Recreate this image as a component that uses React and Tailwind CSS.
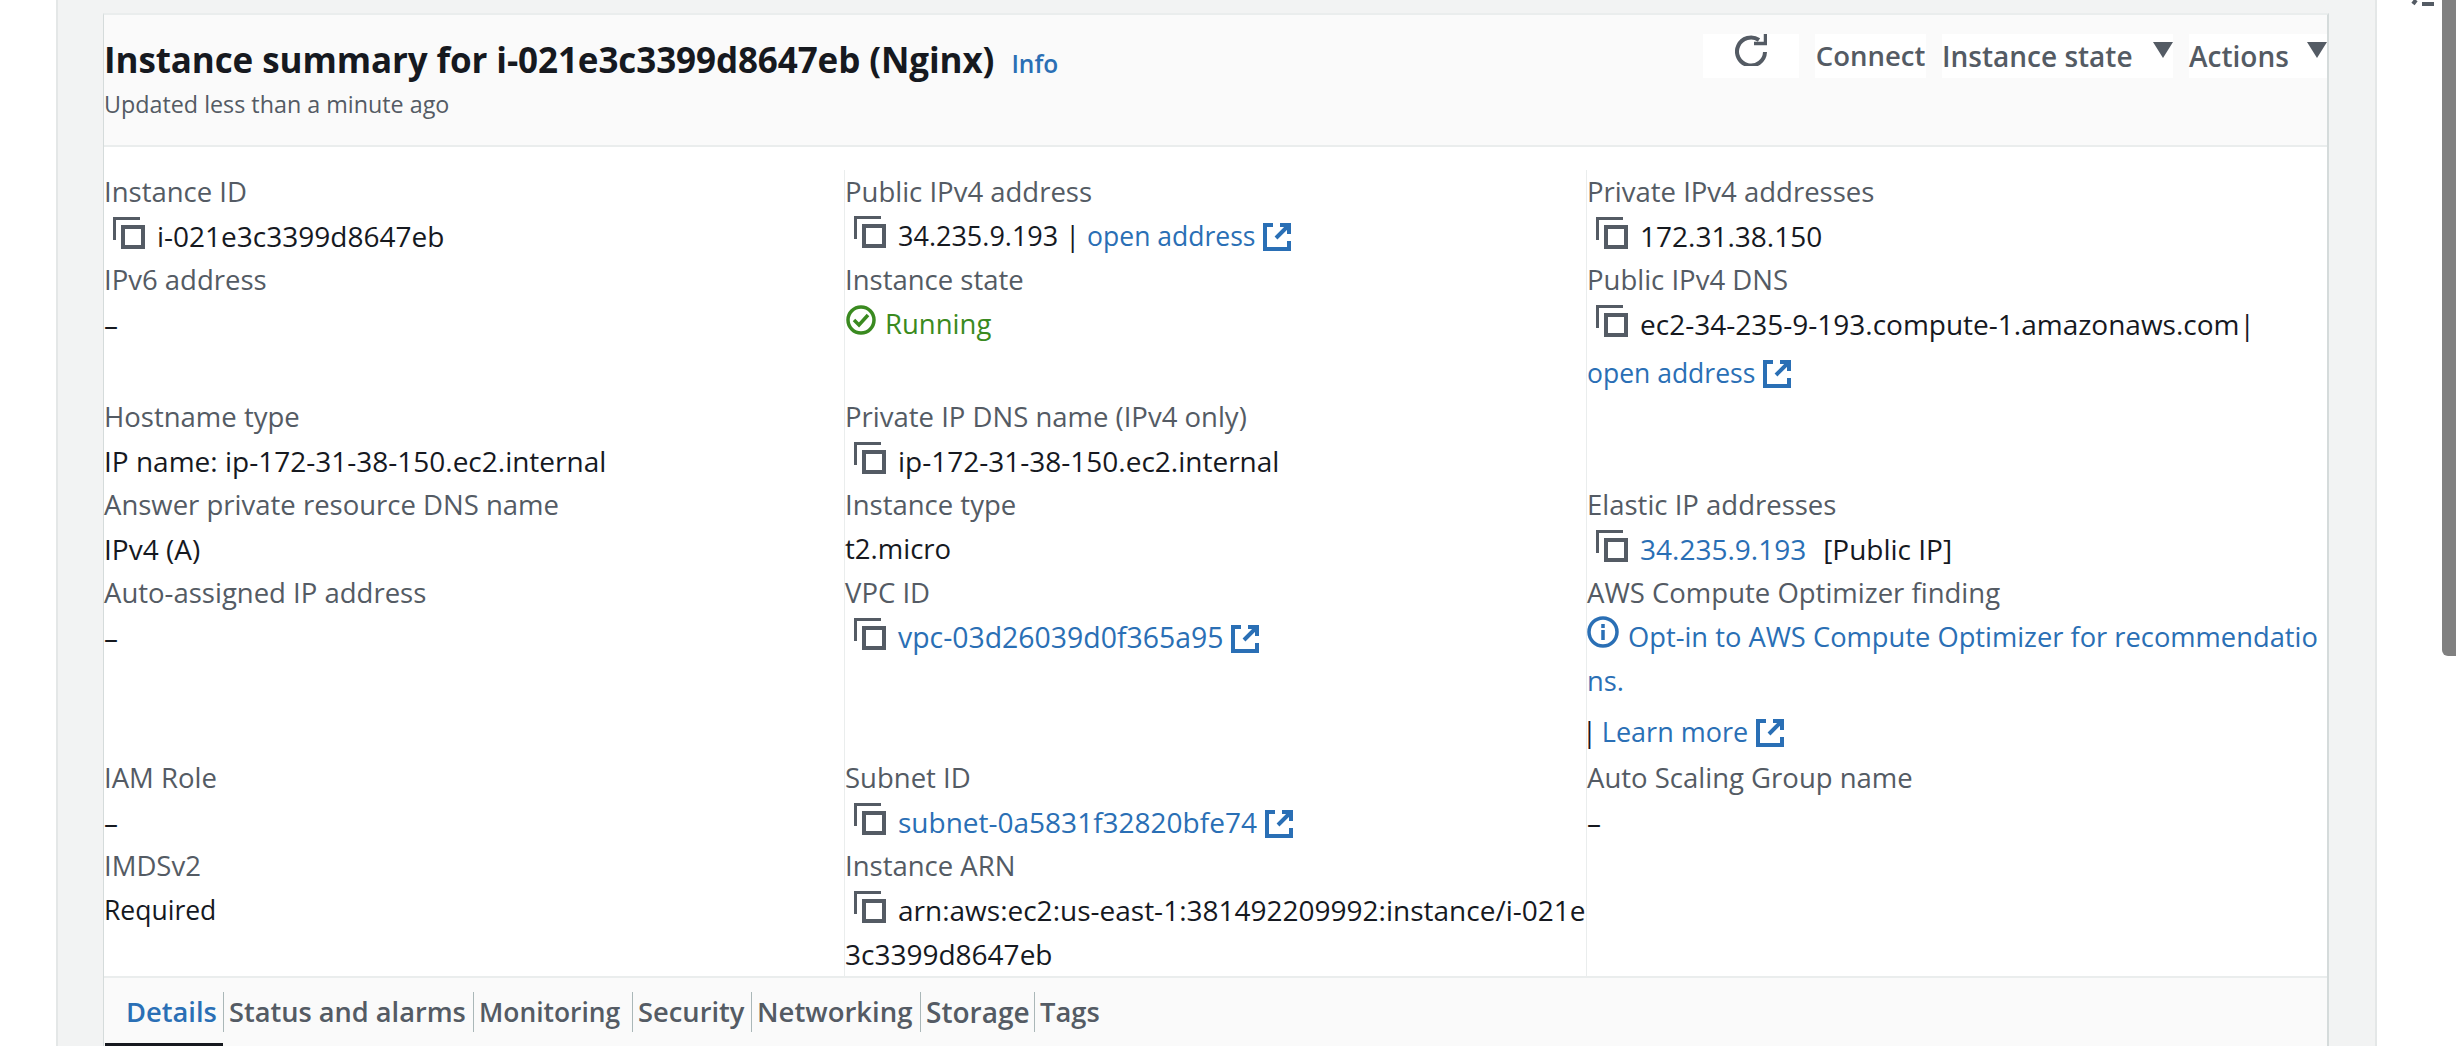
const FONT = "font-['Open_Sans','Liberation_Sans',sans-serif]";

function CopyIcon() {
  return (
    <svg viewBox="0 0 32 32" className="inline-block w-8 h-8 ml-[9px] mr-3 align-[-2px] fill-none stroke-[#545b64]">
      <path d="M1.5 23V1.5H27" strokeWidth="3" />
      <rect x="10" y="10" width="20" height="20" strokeWidth="4" />
    </svg>
  );
}

function ExtIcon() {
  return (
    <svg viewBox="0 0 28 28" className="inline-block w-7 h-7 ml-2 align-[-5px] fill-none stroke-[#2a6fb5]" strokeWidth="4">
      <path d="M10 2H2v24h24v-8M17 2h9v9M25 3 13 15" />
    </svg>
  );
}

function Link({ children, className = '' }) {
  return <span className={`text-[#2a6fb5] ${className}`}>{children}</span>;
}

function Label({ children }) {
  return <div className="h-11 leading-[44px] text-[#545b64]">{children}</div>;
}

function Value({ children, className = '' }) {
  return <div className={`leading-[44px] text-[28px] text-[#16191f] ${className}`}>{children}</div>;
}

function Field({ label, children }) {
  return (
    <div className="min-w-0 border-l border-[#eaeded] [&:nth-child(3n+1)]:border-l-0">
      <Label>{label}</Label>
      {children}
    </div>
  );
}

function Triangle() {
  return (
    <svg viewBox="0 0 20 16" className="w-5 h-4 fill-[#545b64]">
      <path d="M0 0h20L10 16z" />
    </svg>
  );
}

const tabs = [
  { name: 'Status and alarms', box: 'w-[250px]', size: 'text-[27.2px]' },
  { name: 'Monitoring', box: 'w-[159px]', size: 'text-[26.4px]' },
  { name: 'Security', box: 'w-[119px]', size: 'text-[27.3px]' },
  { name: 'Networking', box: 'w-[169px]', size: 'text-[27.5px]' },
  { name: 'Storage', box: 'w-[114px]', size: 'text-[28px]' },
  { name: 'Tags', box: 'w-[80px]', size: 'text-[27.3px]' },
];

export default function App() {
  return (
    <div className={`${FONT} flex h-[1046px] w-[2456px] overflow-hidden bg-white text-[27.5px]`}>
      <div className="w-14 shrink-0" />

      <main className="flex-1 border-x-2 border-[#e4e7e7] bg-[#f2f3f3] pt-[13px] pl-[45px] pr-[46px]">
        <section className="h-full bg-white border-l border-r-2 border-[#d5dbdb] border-t-2 border-t-[#eaeded] flex flex-col">
          <header className="h-[133px] bg-[#fafafa] border-b-2 border-[#eaeded] flex justify-between">
            <div className="pt-[23px]">
              <h1 className="leading-[44px] text-[#16191f] font-bold text-[35px] tracking-[-0.1px]">
                Instance summary for i-021e3c3399d8647eb (Nginx)
                <span className="ml-[17px] text-[24.5px] text-[#2a6fb5] font-semibold tracking-normal">Info</span>
              </h1>
              <p className="mt-[2px] text-[23.3px] leading-8 text-[#545b64]">Updated less than a minute ago</p>
            </div>
            <div className="flex gap-4 pt-[19px] h-[63px] box-content font-semibold text-[#545b64]">
              <div className="w-24 h-11 bg-white flex justify-center">
                <svg viewBox="0 0 32 32" className="w-8 h-8 fill-none stroke-[#545b64]" strokeWidth="4">
                  <path d="M24 6A14 14 0 1 0 30 18" />
                  <path d="M19 9.5H30.5V0" strokeWidth="3.5" />
                </svg>
              </div>
              <div className="h-11 bg-white leading-[44px] w-[111px] text-center whitespace-nowrap">Connect</div>
              <div className="h-11 bg-white leading-[44px] w-[231px] flex justify-between text-[28px]">
                Instance state
                <span className="pt-2"><Triangle /></span>
              </div>
              <div className="h-11 bg-white leading-[44px] w-[138px] flex justify-between text-[28px]">
                Actions
                <span className="pt-2"><Triangle /></span>
              </div>
            </div>
          </header>

          <div className="flex-1 pt-[23px] grid grid-cols-[740px_742px_1fr] grid-rows-[auto_auto_auto_auto_auto_auto_1fr]">
            <Field label="Instance ID"><Value><CopyIcon />i-021e3c3399d8647eb</Value></Field>
            <Field label="Public IPv4 address"><Value className="text-[27px]!"><CopyIcon />34.235.9.193 | <Link className="text-[26.5px]">open address</Link><ExtIcon /></Value></Field>
            <Field label="Private IPv4 addresses"><Value><CopyIcon />172.31.38.150</Value></Field>

            <Field label="IPv6 address"><Value>–</Value></Field>
            <Field label="Instance state">
              <Value className="text-[#3a8a20]! text-[27.5px]!">
                <svg viewBox="0 0 30 30" className="inline-block w-[30px] h-[30px] ml-px mr-[9px] align-[-1px] fill-none stroke-[#3a8a20]" strokeWidth="3.5">
                  <circle cx="15" cy="15" r="13" />
                  <path d="m8 15 5 5 9-10" />
                </svg>
                Running
              </Value>
            </Field>
            <Field label="Public IPv4 DNS">
              <Value><CopyIcon />ec2-34-235-9-193.compute-1.amazonaws.com|</Value>
              <Value className="mt-1"><Link className="text-[26.5px]">open address</Link><ExtIcon /></Value>
            </Field>

            <Field label="Hostname type"><Value>IP name: ip-172-31-38-150.ec2.internal</Value></Field>
            <Field label="Private IP DNS name (IPv4 only)"><Value><CopyIcon />ip-172-31-38-150.ec2.internal</Value></Field>
            <Field label="">{null}</Field>

            <Field label="Answer private resource DNS name"><Value>IPv4 (A)</Value></Field>
            <Field label="Instance type"><Value className="text-[27.5px]!">t2.micro</Value></Field>
            <Field label="Elastic IP addresses"><Value><CopyIcon /><Link>34.235.9.193</Link><span className="ml-[17px]">[Public IP]</span></Value></Field>

            <Field label="Auto-assigned IP address"><Value>–</Value></Field>
            <Field label="VPC ID"><Value><CopyIcon /><Link className="text-[28.4px]">vpc-03d26039d0f365a95</Link><ExtIcon /></Value></Field>
            <Field label="AWS Compute Optimizer finding">
              <Value className="break-all text-[27.3px]!">
                <svg viewBox="0 0 32 32" className="inline-block w-8 h-8 mr-[9px] align-[-1px] fill-none stroke-[#2a6fb5]" strokeWidth="3.5">
                  <circle cx="16" cy="16" r="14" />
                  <path d="M16 14v10M16 8v4" />
                </svg>
                <Link>Opt-in to AWS Compute Optimizer for recommendations.</Link>
              </Value>
              <Value className="mt-[7px] pb-[2px] text-[27px]!">
                <span className="-ml-[5px]">|</span><Link className="ml-[5px]">Learn more</Link><ExtIcon />
              </Value>
            </Field>

            <Field label="IAM Role"><Value>–</Value></Field>
            <Field label="Subnet ID"><Value><CopyIcon /><Link>subnet-0a5831f32820bfe74</Link><ExtIcon /></Value></Field>
            <Field label="Auto Scaling Group name"><Value>–</Value></Field>

            <Field label="IMDSv2"><Value className="text-[26.5px]!">Required</Value></Field>
            <Field label="Instance ARN"><Value className="break-all"><CopyIcon />arn:aws:ec2:us-east-1:381492209992:instance/i-021e3c3399d8647eb</Value></Field>
            <Field label="">{null}</Field>
          </div>

          <nav className="h-[70px] shrink-0 bg-[#fafafa] border-t-2 border-[#eaeded] pt-[14px] flex items-start font-semibold text-[27.3px] text-[#545b64]">
            <div className="relative h-10 leading-10 w-[119px] pl-[22px] text-[#2a6fb5]">
              Details
              <div className="absolute left-[1px] -bottom-[14px] w-[118px] h-[3px] bg-[#16191f]" />
            </div>
            {tabs.map(tab => (
              <div key={tab.name} className={`h-10 leading-10 border-l border-[#aab7b8] pl-[5px] whitespace-nowrap ${tab.box} ${tab.size}`}>{tab.name}</div>
            ))}
          </nav>
        </section>
      </main>

      <div className="w-[65px] shrink-0 relative">
        <svg viewBox="0 0 24 6" className="absolute right-[8px] top-0 w-6 h-[6px] fill-none stroke-[#545b64]" strokeWidth="4">
          <path d="M6 0 3 4M12 4h12" />
        </svg>
      </div>
      <div className="w-[14px] shrink-0 h-[656px] bg-[#808080] rounded-bl-md" />
    </div>
  );
}
